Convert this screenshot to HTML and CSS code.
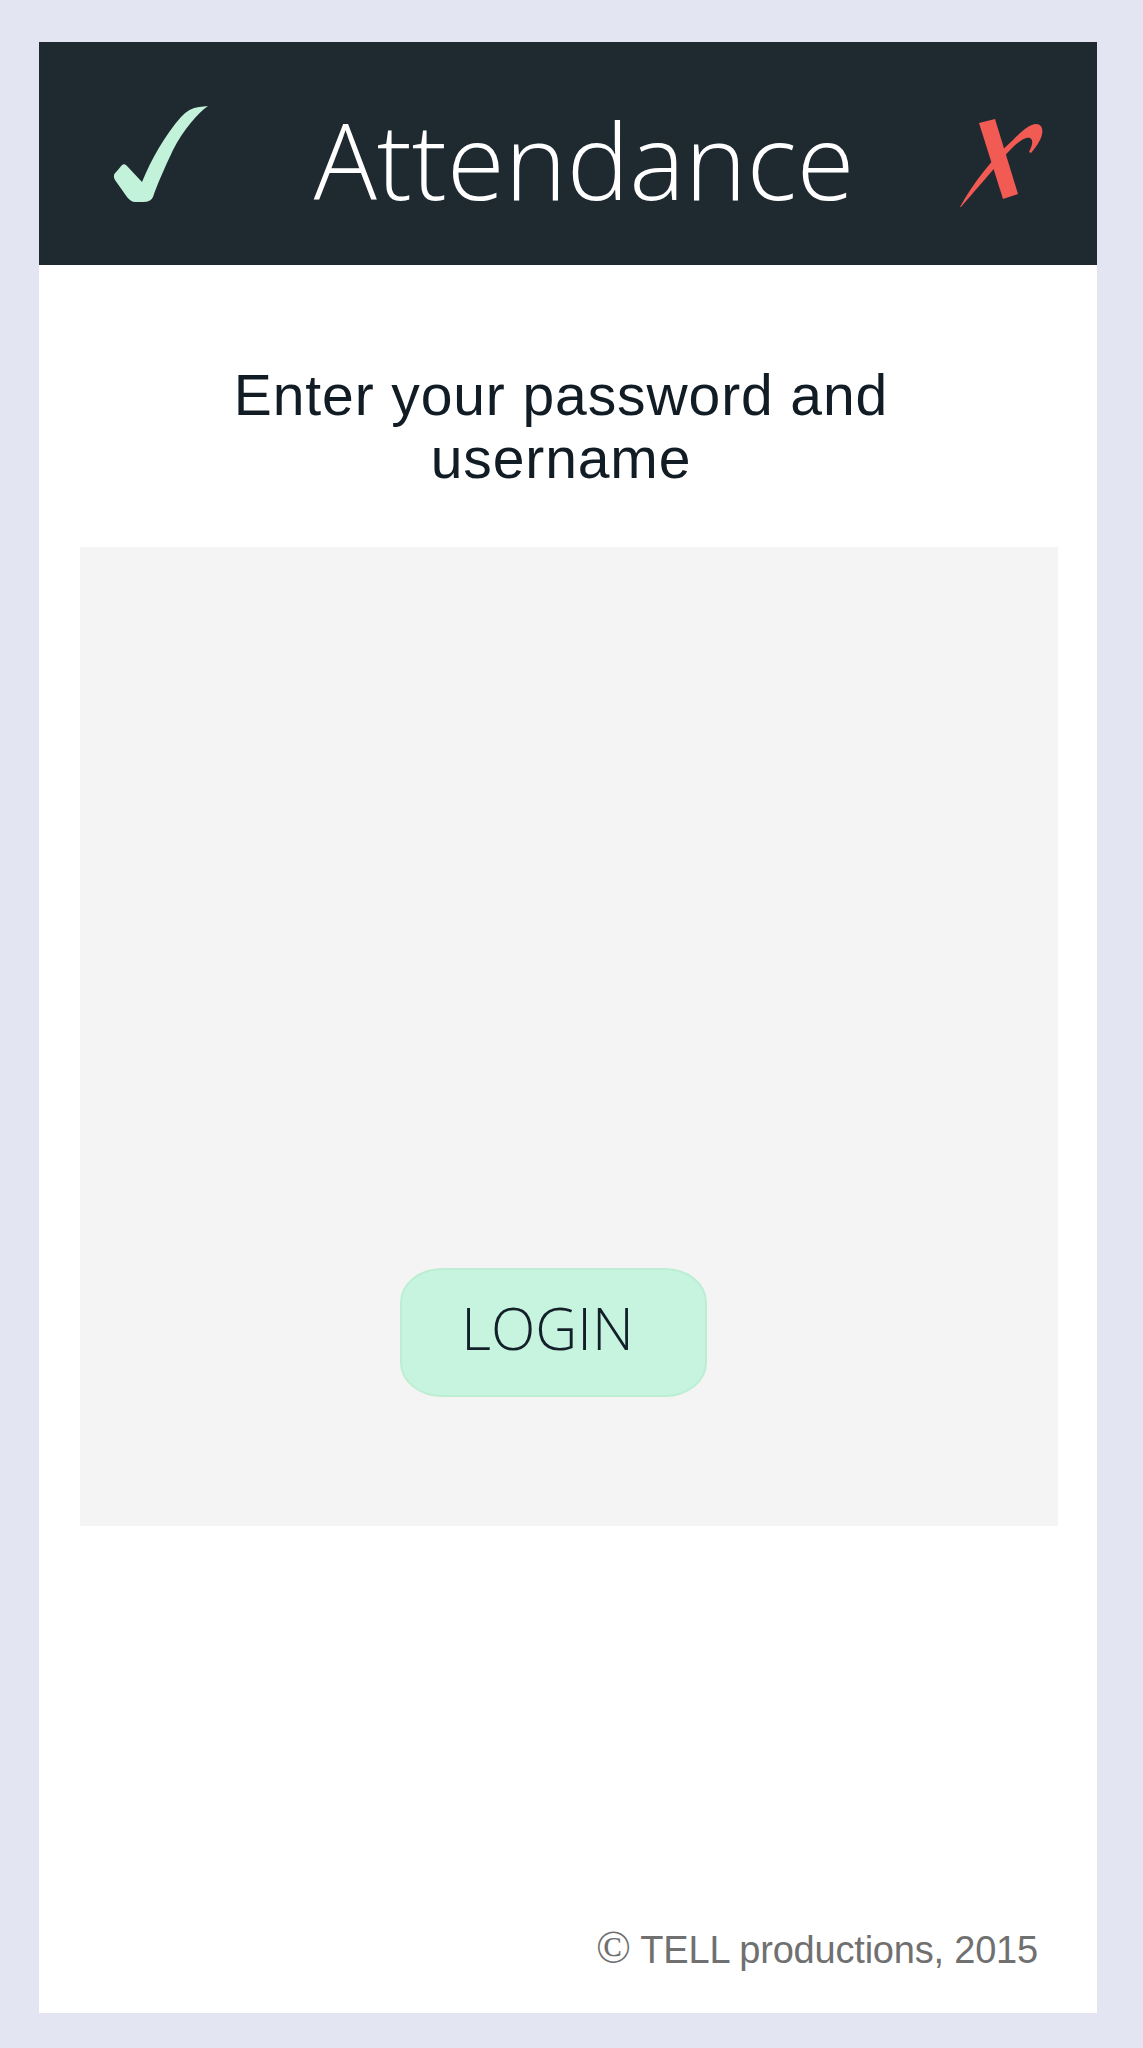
FILE: index.html
```html
<!DOCTYPE html>
<html lang="en">
<head>
<meta charset="utf-8">
<title>Attendance</title>
<link rel="stylesheet" href="styles.css">
</head>
<body>
<div class="card">
  <header class="topbar">
    <svg class="check" width="95" height="97" viewBox="0 0 95 97" aria-hidden="true">
      <path d="M95 1 C85 8 70 25 60 45 C52 62 44 80 40 92 Q38 97 30 97 L22 97 Q18 97 14 92 L2 75 Q-1 70 4 66 L9 60 Q12 58 14 61 L29 77 C38 55 52 30 68 12 Q76 3 86 2 Z" fill="#c3f2da"/>
    </svg>
    <h1 class="title">Attendance</h1>
    <svg class="cross" width="85" height="90" viewBox="0 0 85 90" aria-hidden="true">
      <path d="M21 5 L37 1 L60 76 L45 81 Z" fill="#f25a54"/>
      <path d="M2 89 C15 65 35 40 55 22 C65 12 72 6 78 6 C85 6 86 14 82 22 C79 28 76 31 73 35 L71 34 C74 28 76 22 72 20 C66 18 55 28 45 40 C30 58 15 75 3 89 Z" fill="#f25a54"/>
    </svg>
  </header>
  <p class="prompt">Enter your password and username</p>
  <section class="panel">
    <button class="login" type="button">LOGIN</button>
  </section>
  <footer class="footer"><span class="copy">©</span> TELL productions, 2015</footer>
</div>
</body>
</html>
```
FILE: styles.css
```css
html, body {
  margin: 0;
  padding: 0;
}
body {
  background: #e3e6f2;
  height: 2048px;
  overflow: hidden;
}
.card {
  margin: 42px 0 0 39px;
  width: 1058px;
  height: 1971px;
  background: #ffffff;
  display: flex;
  flex-direction: column;
}
.topbar {
  height: 223px;
  flex: none;
  background: #1f2930;
  display: flex;
  align-items: center;
  padding: 0 54px 0 74px;
  box-sizing: border-box;
}
.check {
  flex: none;
}
.title {
  flex: 1;
  margin: 12px 0 0 0;
  text-align: center;
  color: #ffffff;
  font-family: "Open Sans", "Liberation Sans", sans-serif;
  font-weight: 300;
  font-size: 105px;
  line-height: 1;
  padding-left: 2px;
}
.cross {
  flex: none;
  margin-top: 19px;
}
.prompt {
  flex: none;
  margin: 99px auto 0 auto;
  width: 720px;
  padding-right: 14px;
  text-align: center;
  color: #111c24;
  font-family: "Liberation Sans", Arial, sans-serif;
  font-size: 57px;
  line-height: 63px;
  letter-spacing: 0.9px;
}
.panel {
  flex: none;
  margin: 57px 0 0 41px;
  width: 978px;
  height: 979px;
  background: #f4f4f4;
  box-sizing: border-box;
  padding: 721px 0 0 320px;
}
.login {
  display: block;
  width: 307px;
  height: 129px;
  margin: 0;
  padding: 0 12px 10px 0;
  background: #c6f4de;
  border: 2px solid #bdeed4;
  border-radius: 42px / 34px;
  color: #13202a;
  font-family: "Open Sans", "Liberation Sans", sans-serif;
  font-weight: 300;
  font-size: 58px;
  line-height: 1;
}
.footer {
  margin-top: auto;
  padding: 0 59px 39px 0;
  text-align: right;
  color: #707070;
  font-family: "Liberation Sans", Arial, sans-serif;
  font-size: 38px;
  line-height: 48px;
  letter-spacing: -0.2px;
  white-space: nowrap;
}
.copy {
  font-family: "Liberation Serif", serif;
  font-size: 46px;
}
```
